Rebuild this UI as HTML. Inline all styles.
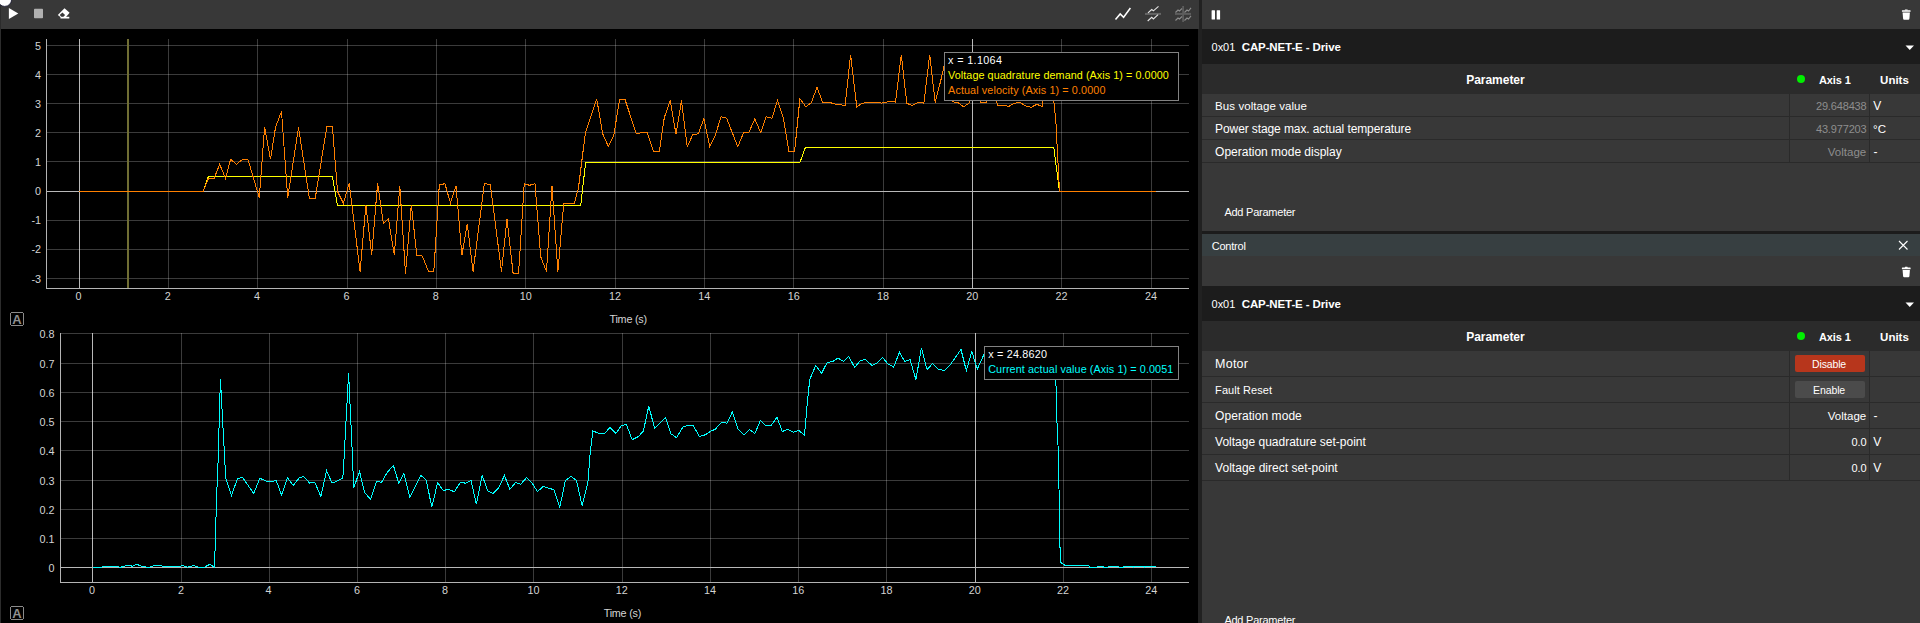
<!DOCTYPE html>
<html><head><meta charset="utf-8"><title>Monitor</title>
<style>
html,body{margin:0;padding:0;background:#000;}
body{width:1920px;height:623px;position:relative;overflow:hidden;font-family:"Liberation Sans",sans-serif;font-size:12px;color:#fff;}
.abs{position:absolute;}
.plot{position:absolute;left:0;top:0;}
#ltb{left:0;top:0;width:1199px;z-index:2;height:29px;background:#383838;}
#lstrip{left:0;top:0;width:1px;height:623px;background:#2c2c2c;z-index:3;}
#div{left:1198px;top:0;width:4px;height:623px;background:#212121;}
#rp{left:1202px;top:0;width:718px;height:623px;background:#383838;}
.hdr{left:0;width:718px;height:35px;background:#1c1c1c;}
.phdr{left:0;width:718px;background:#2b2b2b;font-weight:bold;}
.t{position:absolute;white-space:nowrap;line-height:14px;}
.row{position:absolute;left:0;width:718px;border-bottom:1px solid #2a2a2a;box-sizing:border-box;}
.vl{position:absolute;width:1px;background:#2a2a2a;}
.g{color:#8e8e8e;}
.btn{position:absolute;left:593px;width:70px;height:17px;border-radius:2px;text-align:center;line-height:17px;font-size:12px;}
</style></head><body>
<svg class="plot" width="1198" height="623" viewBox="0 0 1198 623" shape-rendering="crispEdges" font-family="Liberation Sans, sans-serif" font-size="10.8" fill="#d4d4d4"><rect x="79" y="39" width="1" height="249" fill="#b9b9b9"/>
<rect x="168" y="39" width="1" height="249" fill="rgba(255,255,255,0.23)"/>
<rect x="257" y="39" width="1" height="249" fill="rgba(255,255,255,0.23)"/>
<rect x="347" y="39" width="1" height="249" fill="rgba(255,255,255,0.23)"/>
<rect x="436" y="39" width="1" height="249" fill="rgba(255,255,255,0.23)"/>
<rect x="525" y="39" width="1" height="249" fill="rgba(255,255,255,0.23)"/>
<rect x="615" y="39" width="1" height="249" fill="rgba(255,255,255,0.23)"/>
<rect x="704" y="39" width="1" height="249" fill="rgba(255,255,255,0.23)"/>
<rect x="793" y="39" width="1" height="249" fill="rgba(255,255,255,0.23)"/>
<rect x="883" y="39" width="1" height="249" fill="rgba(255,255,255,0.23)"/>
<rect x="972" y="39" width="1" height="249" fill="#b9b9b9"/>
<rect x="1061" y="39" width="1" height="249" fill="rgba(255,255,255,0.23)"/>
<rect x="1151" y="39" width="1" height="249" fill="rgba(255,255,255,0.23)"/>
<rect x="46" y="278" width="1143" height="1" fill="rgba(255,255,255,0.23)"/>
<rect x="46" y="249" width="1143" height="1" fill="rgba(255,255,255,0.23)"/>
<rect x="46" y="220" width="1143" height="1" fill="rgba(255,255,255,0.23)"/>
<rect x="46" y="191" width="1143" height="1" fill="#b9b9b9"/>
<rect x="46" y="161" width="1143" height="1" fill="rgba(255,255,255,0.23)"/>
<rect x="46" y="132" width="1143" height="1" fill="rgba(255,255,255,0.23)"/>
<rect x="46" y="103" width="1143" height="1" fill="rgba(255,255,255,0.23)"/>
<rect x="46" y="74" width="1143" height="1" fill="rgba(255,255,255,0.23)"/>
<rect x="46" y="45" width="1143" height="1" fill="rgba(255,255,255,0.23)"/>
<rect x="127" y="39" width="2" height="249" fill="#706e34"/>
<rect x="46" y="39" width="1" height="250" fill="#b4b4b4"/>
<rect x="46" y="288" width="1143" height="1" fill="#b4b4b4"/>
<text x="78.5" y="300" text-anchor="middle">0</text>
<text x="167.8" y="300" text-anchor="middle">2</text>
<text x="257.1" y="300" text-anchor="middle">4</text>
<text x="346.5" y="300" text-anchor="middle">6</text>
<text x="435.8" y="300" text-anchor="middle">8</text>
<text x="525.7" y="300" text-anchor="middle">10</text>
<text x="615.0" y="300" text-anchor="middle">12</text>
<text x="704.3" y="300" text-anchor="middle">14</text>
<text x="793.7" y="300" text-anchor="middle">16</text>
<text x="883.0" y="300" text-anchor="middle">18</text>
<text x="972.3" y="300" text-anchor="middle">20</text>
<text x="1061.6" y="300" text-anchor="middle">22</text>
<text x="1150.9" y="300" text-anchor="middle">24</text>
<text x="41" y="282.5" text-anchor="end">-3</text>
<text x="41" y="253.3" text-anchor="end">-2</text>
<text x="41" y="224.2" text-anchor="end">-1</text>
<text x="41" y="195.1" text-anchor="end">0</text>
<text x="41" y="166.0" text-anchor="end">1</text>
<text x="41" y="136.8" text-anchor="end">2</text>
<text x="41" y="107.7" text-anchor="end">3</text>
<text x="41" y="78.6" text-anchor="end">4</text>
<text x="41" y="49.5" text-anchor="end">5</text>
<text x="628.3" y="323" text-anchor="middle" textLength="37.7">Time (s)</text>
<rect x="92" y="333" width="1" height="249" fill="#b9b9b9"/>
<rect x="181" y="333" width="1" height="249" fill="rgba(255,255,255,0.23)"/>
<rect x="269" y="333" width="1" height="249" fill="rgba(255,255,255,0.23)"/>
<rect x="357" y="333" width="1" height="249" fill="rgba(255,255,255,0.23)"/>
<rect x="445" y="333" width="1" height="249" fill="rgba(255,255,255,0.23)"/>
<rect x="533" y="333" width="1" height="249" fill="rgba(255,255,255,0.23)"/>
<rect x="622" y="333" width="1" height="249" fill="rgba(255,255,255,0.23)"/>
<rect x="710" y="333" width="1" height="249" fill="rgba(255,255,255,0.23)"/>
<rect x="798" y="333" width="1" height="249" fill="rgba(255,255,255,0.23)"/>
<rect x="886" y="333" width="1" height="249" fill="rgba(255,255,255,0.23)"/>
<rect x="975" y="333" width="1" height="249" fill="#b9b9b9"/>
<rect x="1063" y="333" width="1" height="249" fill="rgba(255,255,255,0.23)"/>
<rect x="1151" y="333" width="1" height="249" fill="rgba(255,255,255,0.23)"/>
<rect x="60" y="567" width="1129" height="1" fill="#b9b9b9"/>
<rect x="60" y="538" width="1129" height="1" fill="rgba(255,255,255,0.23)"/>
<rect x="60" y="509" width="1129" height="1" fill="rgba(255,255,255,0.23)"/>
<rect x="60" y="480" width="1129" height="1" fill="rgba(255,255,255,0.23)"/>
<rect x="60" y="450" width="1129" height="1" fill="rgba(255,255,255,0.23)"/>
<rect x="60" y="421" width="1129" height="1" fill="rgba(255,255,255,0.23)"/>
<rect x="60" y="392" width="1129" height="1" fill="rgba(255,255,255,0.23)"/>
<rect x="60" y="363" width="1129" height="1" fill="rgba(255,255,255,0.23)"/>
<rect x="60" y="333" width="1129" height="1" fill="rgba(255,255,255,0.23)"/>
<rect x="60" y="333" width="1" height="250" fill="#b4b4b4"/>
<rect x="60" y="582" width="1129" height="1" fill="#b4b4b4"/>
<text x="92.1" y="594" text-anchor="middle">0</text>
<text x="181.1" y="594" text-anchor="middle">2</text>
<text x="268.6" y="594" text-anchor="middle">4</text>
<text x="356.9" y="594" text-anchor="middle">6</text>
<text x="445.1" y="594" text-anchor="middle">8</text>
<text x="533.4" y="594" text-anchor="middle">10</text>
<text x="621.7" y="594" text-anchor="middle">12</text>
<text x="709.9" y="594" text-anchor="middle">14</text>
<text x="798.2" y="594" text-anchor="middle">16</text>
<text x="886.4" y="594" text-anchor="middle">18</text>
<text x="974.7" y="594" text-anchor="middle">20</text>
<text x="1063.0" y="594" text-anchor="middle">22</text>
<text x="1151.2" y="594" text-anchor="middle">24</text>
<text x="54.6" y="571.7" text-anchor="end">0</text>
<text x="54.6" y="542.7" text-anchor="end">0.1</text>
<text x="54.6" y="513.7" text-anchor="end">0.2</text>
<text x="54.6" y="484.7" text-anchor="end">0.3</text>
<text x="54.6" y="454.7" text-anchor="end">0.4</text>
<text x="54.6" y="425.7" text-anchor="end">0.5</text>
<text x="54.6" y="396.7" text-anchor="end">0.6</text>
<text x="54.6" y="367.7" text-anchor="end">0.7</text>
<text x="54.6" y="337.7" text-anchor="end">0.8</text>
<text x="622.5" y="617" text-anchor="middle" textLength="37.7">Time (s)</text>
<polyline points="79.2,191.5 203,191.5 208.4,176.5 332.4,176.5 337.5,205.5 580.7,205.5 585.6,162.5 799.9,162.5 805.4,147.5 1053.8,147.5 1059.5,191.5 1155.8,191.5" fill="none" stroke="#ffff00" stroke-width="1"/>
<polyline points="79.2,191.5 203.0,191.5 208.4,178.5 214.2,178.1 219.7,164.3 225.6,178.5 230.6,159.3 236.4,164.3 242.6,159.3 247.9,159.3 259.3,197.7 264.6,127.2 270.5,159.3 275.5,127.5 281.5,111.4 287.7,197.7 298.5,127.5 309.4,198.5 315.2,198.5 326.9,126.2 332.4,126.2 337.5,191.4 343.4,203.4 349.2,183.3 360.1,271.5 365.9,205.0 371.7,255.1 377.6,183.3 383.4,223.4 388.4,218.7 394.3,255.1 399.8,185.8 405.5,273.5 411.3,204.7 416.8,255.1 422.3,256.0 428.5,271.5 433.8,271.5 439.3,185.0 444.9,183.7 450.5,203.0 456.0,185.8 461.9,255.1 467.2,223.7 473.1,271.5 484.4,183.3 490.3,184.7 501.5,271.5 507.0,218.7 513.1,273.2 518.6,273.2 524.2,183.7 529.5,185.3 535.0,183.7 540.7,256.8 546.5,271.5 552.0,185.8 557.9,271.5 563.7,203.7 574.2,203.7 578.4,188.3 585.4,132.6 596.7,98.7 602.6,133.5 608.4,146.5 613.8,135.1 619.6,99.6 625.1,99.6 636.3,133.8 641.8,132.6 647.1,132.6 653.5,151.5 659.3,151.5 664.3,117.6 670.2,100.4 676.0,134.3 681.5,100.4 687.2,146.8 692.7,134.8 698.2,133.8 703.9,118.8 709.7,146.5 715.3,135.1 721.1,116.8 726.6,118.1 737.8,146.8 743.6,132.6 749.1,132.1 754.8,118.8 760.7,132.6 766.2,116.8 772.0,118.4 777.4,100.4 783.2,117.6 789.0,151.5 794.6,151.5 799.9,98.7 805.8,106.8 811.4,102.6 817.0,87.2 822.5,102.1 830.1,102.6 835.9,104.3 845.1,105.4 850.6,54.7 856.8,107.1 861.8,103.4 866.8,102.3 875.1,102.6 881.8,103.1 890.2,101.4 895.5,102.1 901.3,54.7 906.8,103.4 912.2,105.4 918.5,102.3 923.9,103.1 929.7,54.7 935.2,102.6 941.1,79.2 946.6,54.7 952.3,101.8 957.8,102.6 963.6,106.8 969.1,103.1 974.8,54.7 980.6,102.6 986.1,102.6 992.0,78.4 997.5,105.1 1003.7,105.1 1008.7,106.4 1014.2,103.4 1019.5,102.1 1025.4,105.9 1031.2,107.3 1036.7,104.3 1042.1,106.4 1047.9,73.4 1053.4,96.8 1053.8,100.4 1056,124 1059.5,191.5 1155.8,191.5" fill="none" stroke="#ff8000" stroke-width="1"/>
<polyline points="92.6,567.3 101.7,567.2 102.6,566.3 117.6,566.3 120.1,567.3 122.6,566.8 125.9,565.5 131.0,565.7 132.1,566.3 137.1,564.3 141.8,566.5 148.5,567.3 155.2,565.5 161.0,565.7 162.7,566.5 180.2,566.5 181.9,565.5 184.4,566.0 187.2,567.2 193.6,565.5 198.6,567.2 204.4,567.2 209.7,564.3 214.4,567.2 215.6,535.1 216.4,500.9 217.8,470 220.4,379.2 225.3,470 225.8,478.3 231.5,495.4 237.5,478.7 242.5,477.5 253.7,493.4 259.8,478.3 267.0,481.4 270.7,482.0 276.2,480.4 281.7,495.4 287.4,477.5 293.2,485.4 299.6,477.5 303.7,476.7 309.6,483.0 314.9,482.5 320.8,496.4 326.6,470.8 331.8,482.5 335.5,482.0 342.1,478.3 343.2,474 348.6,373 352.0,446.7 353.7,488.1 359.5,471.4 364.7,492.6 370.5,499.3 376.4,481.8 381.7,482.1 387.1,472.6 393.4,465.4 398.7,483.1 403.9,473.4 409.8,497.1 421.0,475.4 426.3,480.1 431.8,507.3 437.6,482.6 443.2,490.5 448.8,489.3 454.3,491.8 460.2,482.6 465.5,483.1 471.0,480.4 476.4,504.3 482.2,475.4 487.7,491.0 493.2,493.5 498.9,487.6 504.4,475.4 509.9,489.3 515.6,482.6 520.6,484.3 526.6,477.6 532.0,483.1 537.5,491.5 543.3,486.4 548.7,488.1 554.0,489.8 559.8,507.3 565.4,480.4 571.2,476.4 576.5,480.4 582.1,505.6 587.9,482.6 590.4,450.4 592.9,430.9 593.0,431.0 599.2,433.5 604.7,433.5 610.0,427.3 615.9,433.5 621.4,425.5 626.4,424.6 632.2,439.7 638.4,436.5 643.4,431.0 648.8,405.9 654.6,428.5 665.6,417.6 671.0,433.8 676.5,437.7 683.2,426.5 688.5,425.5 693.5,426.0 699.3,436.5 705.2,434.8 710.2,431.5 715.2,429.3 721.6,422.1 726.9,423.1 732.4,411.8 738.1,429.3 743.9,434.8 749.4,429.6 754.9,433.5 760.3,420.6 765.8,425.6 771.1,425.5 777.0,417.3 782.3,431.5 787.8,429.3 793.7,432.3 798.7,430.2 804.5,435.5 806.5,411.8 808.7,389.2 809.9,379.2 815.7,365.5 821.6,373.4 827.1,362.5 832.9,361.4 837.9,358.0 843.4,361.4 848.8,356.4 854.6,367.5 860.5,360.4 865.5,359.7 872.1,365.5 877.1,363.0 882.5,357.5 888.0,363.9 893.7,367.1 899.5,352.2 904.7,361.4 910.1,359.7 915.9,379.6 921.4,348.0 927.1,369.7 932.6,363.4 938.4,369.2 944.3,370.6 949.8,365.4 961.0,349.5 966.3,370.6 971.8,351.4 977.3,369.2 983.5,355.4 989.0,365.9 994.7,360.1 1000.2,370.1 1006.0,356.7 1011.9,364.2 1017.2,361.7 1023.1,371.7 1028.6,353.4 1034.4,365.9 1039.9,359.2 1045.3,367.6 1050.6,355.0 1055.0,363.4 1055.3,379.6 1056.1,387 1057,423 1058,445 1059.6,515 1060.2,561.6 1062,563.5 1065.5,565.5 1088.5,565.5 1090,567.5 1096,567.5 1097.5,566.5 1103,566.5 1104,567.5 1107.5,567.5 1108.5,566.5 1118.5,566.5 1119.5,567.5 1123,567.5 1124,566.5 1132.5,566.5 1133.3,567.5 1134,566.5 1144,566.5 1144.8,567.5 1145.5,566.5 1155.8,566.5" fill="none" stroke="#00ffff" stroke-width="1"/>
<rect x="944.5" y="52.5" width="234" height="48" fill="#000" stroke="#828282"/>
<text x="948.1" y="64" fill="#fff" textLength="53.9">x = 1.1064</text>
<text x="948.1" y="79" fill="#ffff00" textLength="220.7">Voltage quadrature demand (Axis 1) = 0.0000</text>
<text x="948.1" y="94" fill="#ff8000" textLength="157.3">Actual velocity (Axis 1) = 0.0000</text>
<rect x="984.5" y="346.5" width="194" height="33" fill="#000" stroke="#828282"/>
<text x="988.2" y="358" fill="#fff" textLength="58.7">x = 24.8620</text>
<text x="988.2" y="373" fill="#00ffff" textLength="185.1">Current actual value (Axis 1) = 0.0051</text>
<rect x="10.5" y="312.5" width="13" height="13" rx="2" fill="none" stroke="#8a8a8a"/>
<text x="17" y="324.0" text-anchor="middle" font-weight="bold" font-size="13" fill="#8f8f8f">A</text>
<rect x="10.5" y="606.5" width="13" height="13" rx="2" fill="none" stroke="#8a8a8a"/>
<text x="17" y="618.0" text-anchor="middle" font-weight="bold" font-size="13" fill="#8f8f8f">A</text></svg>
<div class="abs" id="ltb">
<svg class="abs" style="left:0;top:0" width="1199" height="29" viewBox="0 0 1199 29">
<path d="M8.9 8 L18.3 13.5 L8.9 19.1 Z" fill="#fff"/>
<rect x="34" y="8.8" width="9" height="9.5" rx="0.8" fill="#b0b0b0"/>
<path d="M64.5 8.3 L69.6 12.8 L65.6 17.6 H61 L57.8 15 Z" fill="#fff"/>
<path d="M62.4 12.5 L65.1 15 L63.3 16.9 H61.5 L59.7 15 Z" fill="#383838"/>
<rect x="60.5" y="16.8" width="8.8" height="1.7" fill="#fff"/>
<path d="M1115.5 19.6 L1120.2 13.9 L1123.6 17.3 L1130.4 8" fill="none" stroke="#fff" stroke-width="1.5"/>
<rect x="1145" y="12.9" width="16" height="2" fill="#666"/>
<g fill="none" stroke="#e6e6e6" stroke-width="1.1"><path d="M1148 12.9 L1151.7 9.5 L1153.4 10.8 L1158.5 6.4"/><path d="M1147.7 21 L1151.7 17.3 L1153.4 19 L1158.1 14.6"/></g>
<rect x="1175" y="12.9" width="16" height="2" fill="#5c5c5c"/><rect x="1182.2" y="6" width="1.8" height="16" fill="#5c5c5c"/>
<g fill="none" stroke="#8c8c8c" stroke-width="1.1"><path d="M1175.5 12.5 L1178 10 L1179.5 11 L1182 8.5 M1184.5 12.5 L1187 10 L1188.5 11 L1191 7.8"/><path d="M1175.5 20.5 L1178 18 L1179.5 19 L1182 16.5 M1184.5 20.5 L1187 18 L1188.5 19 L1191 15.8"/></g>
</svg>
</div>
<div class="abs" id="lstrip"></div>
<svg class="abs" style="left:0;top:0;z-index:4" width="14" height="9" viewBox="0 0 14 9"><circle cx="4.7" cy="-0.5" r="6.9" fill="#fff" stroke="#0c0c28" stroke-width="0.8"/></svg>
<div class="abs" id="div"></div>
<div class="abs" id="rp">
 <!-- upper toolbar -->
 <svg class="abs" style="left:0;top:0" width="718" height="29" viewBox="0 0 718 29"><rect x="9.6" y="10.2" width="3.4" height="9.4" rx="0.5" fill="#fff"/><rect x="14.7" y="10.2" width="3.4" height="9.4" rx="0.5" fill="#fff"/>
 <g fill="#fff"><rect x="699.9" y="10.2" width="8.7" height="1.6" rx="0.5"/><rect x="702.8" y="9.4" width="2.9" height="1.2" rx="0.4"/><path d="M700.6 12.5 H707.9 L707.4 18.8 Q707.3 19.8 706.3 19.8 H702.2 Q701.2 19.8 701.1 18.8 Z"/></g></svg>
 <div class="abs hdr" style="top:29px">
 <svg class="abs" style="left:703.2px;top:15.7px" width="10" height="6"><path d="M0.5 0.5 H9 L4.75 5 Z" fill="#fff"/></svg></div>
 <div class="abs phdr" style="top:64px;height:30px"><span class="abs" style="left:594.7px;top:10.8px;width:8.6px;height:8.6px;border-radius:50%;background:#00ee00"></span></div>
 <div class="row" style="top:94px;height:23px"></div>
 <div class="row" style="top:117px;height:23px"></div>
 <div class="row" style="top:140px;height:23px"></div>
 <div class="vl" style="left:587px;top:94px;height:69px"></div><div class="vl" style="left:667px;top:94px;height:69px"></div>
 
 <div class="abs" style="left:0;top:231px;width:718px;height:3px;background:#1c1c1c"></div>
 <div class="abs" style="left:0;top:234px;width:718px;height:22px;background:#373f41">
 <svg class="abs" style="left:696px;top:6px" width="11" height="11"><path d="M1 1 L9.5 9.5 M9.5 1 L1 9.5" stroke="#fff" stroke-width="1.1" fill="none"/></svg></div>
 <svg class="abs" style="left:0;top:256px" width="718" height="30" viewBox="0 0 718 30"><g fill="#fff"><rect x="699.9" y="11.6" width="8.7" height="1.6" rx="0.5"/><rect x="702.8" y="10.8" width="2.9" height="1.2" rx="0.4"/><path d="M700.6 13.9 H707.9 L707.4 20.2 Q707.3 21.2 706.3 21.2 H702.2 Q701.2 21.2 701.1 20.2 Z"/></g></svg>
 <div class="abs hdr" style="top:286px">
 <svg class="abs" style="left:703.2px;top:15.7px" width="10" height="6"><path d="M0.5 0.5 H9 L4.75 5 Z" fill="#fff"/></svg></div>
 <div class="abs phdr" style="top:321px;height:30px"><span class="abs" style="left:594.7px;top:10.8px;width:8.6px;height:8.6px;border-radius:50%;background:#00ee00"></span></div>
 <div class="row" style="top:351px;height:26px"><span class="btn" style="top:4px;background:#b7361c"></span></div>
 <div class="row" style="top:377px;height:26px"><span class="btn" style="top:4px;background:#4b4b4b"></span></div>
 <div class="row" style="top:403px;height:26px"></div>
 <div class="row" style="top:429px;height:26px"></div>
 <div class="row" style="top:455px;height:26px"></div>
 <div class="vl" style="left:587px;top:351px;height:130px"></div><div class="vl" style="left:667px;top:351px;height:130px"></div>
 
<span class="t" style="top:40.3px;left:9.6px;letter-spacing:-0.053px;font-size:11px;">0x01</span>
<span class="t" style="top:40.1px;left:39.7px;letter-spacing:-0.111px;font-weight:bold;font-size:11.5px;">CAP-NET-E - Drive</span>
<span class="t" style="top:73.0px;left:264.2px;letter-spacing:-0.027px;font-weight:bold;">Parameter</span>
<span class="t" style="top:73.4px;left:616.9px;letter-spacing:-0.064px;font-weight:bold;font-size:11px;">Axis 1</span>
<span class="t" style="top:73.2px;left:678.1px;letter-spacing:-0.013px;font-weight:bold;font-size:11.5px;">Units</span>
<span class="t" style="top:99.2px;left:13.1px;letter-spacing:0.069px;font-size:11.5px;">Bus voltage value</span>
<span class="t" style="top:99.4px;right:53.5px;letter-spacing:-0.162px;color:#8e8e8e;font-size:11px;">29.648438</span>
<span class="t" style="top:99.0px;left:671.2px;">V</span>
<span class="t" style="top:121.9px;left:13.1px;letter-spacing:-0.101px;">Power stage max. actual temperature</span>
<span class="t" style="top:122.3px;right:53.5px;letter-spacing:-0.162px;color:#8e8e8e;font-size:11px;">43.977203</span>
<span class="t" style="top:122.1px;left:671.0px;letter-spacing:0.094px;font-size:11.5px;">°C</span>
<span class="t" style="top:144.8px;left:13.1px;letter-spacing:-0.007px;">Operation mode display</span>
<span class="t" style="top:145.0px;right:53.7px;letter-spacing:0.038px;color:#8e8e8e;font-size:11.5px;">Voltage</span>
<span class="t" style="top:144.8px;left:671.5px;">-</span>
<span class="t" style="top:205.2px;left:22.4px;letter-spacing:-0.240px;font-size:11px;">Add Parameter</span>
<span class="t" style="top:239.3px;left:9.7px;letter-spacing:-0.211px;font-size:11px;">Control</span>
<span class="t" style="top:297.3px;left:9.6px;letter-spacing:-0.053px;font-size:11px;">0x01</span>
<span class="t" style="top:297.1px;left:39.7px;letter-spacing:-0.111px;font-weight:bold;font-size:11.5px;">CAP-NET-E - Drive</span>
<span class="t" style="top:330.0px;left:264.2px;letter-spacing:-0.027px;font-weight:bold;">Parameter</span>
<span class="t" style="top:330.4px;left:616.9px;letter-spacing:-0.064px;font-weight:bold;font-size:11px;">Axis 1</span>
<span class="t" style="top:330.2px;left:678.1px;letter-spacing:-0.013px;font-weight:bold;font-size:11.5px;">Units</span>
<span class="t" style="top:356.7px;left:13.1px;letter-spacing:0.212px;font-size:12.5px;">Motor</span>
<span class="t" style="top:383.2px;left:13.1px;letter-spacing:0.065px;font-size:11px;">Fault Reset</span>
<span class="t" style="top:408.7px;left:13.1px;letter-spacing:0.049px;">Operation mode</span>
<span class="t" style="top:408.9px;right:53.7px;letter-spacing:0.038px;font-size:11.5px;">Voltage</span>
<span class="t" style="top:408.7px;left:671.5px;">-</span>
<span class="t" style="top:434.7px;left:13.1px;">Voltage quadrature set-point</span>
<span class="t" style="top:435.1px;right:53.6px;letter-spacing:-0.098px;font-size:11px;">0.0</span>
<span class="t" style="top:434.7px;left:671.2px;">V</span>
<span class="t" style="top:460.7px;left:13.1px;letter-spacing:0.023px;">Voltage direct set-point</span>
<span class="t" style="top:461.1px;right:53.6px;letter-spacing:-0.098px;font-size:11px;">0.0</span>
<span class="t" style="top:460.7px;left:671.2px;">V</span>
<span class="t" style="top:357.0px;left:610.1px;letter-spacing:-0.155px;font-size:10.5px;">Disable</span>
<span class="t" style="top:383.2px;left:611.1px;letter-spacing:-0.121px;font-size:10.5px;">Enable</span>
<span class="t" style="top:612.8px;left:22.4px;letter-spacing:-0.240px;font-size:11px;">Add Parameter</span>
</div>
</body></html>
